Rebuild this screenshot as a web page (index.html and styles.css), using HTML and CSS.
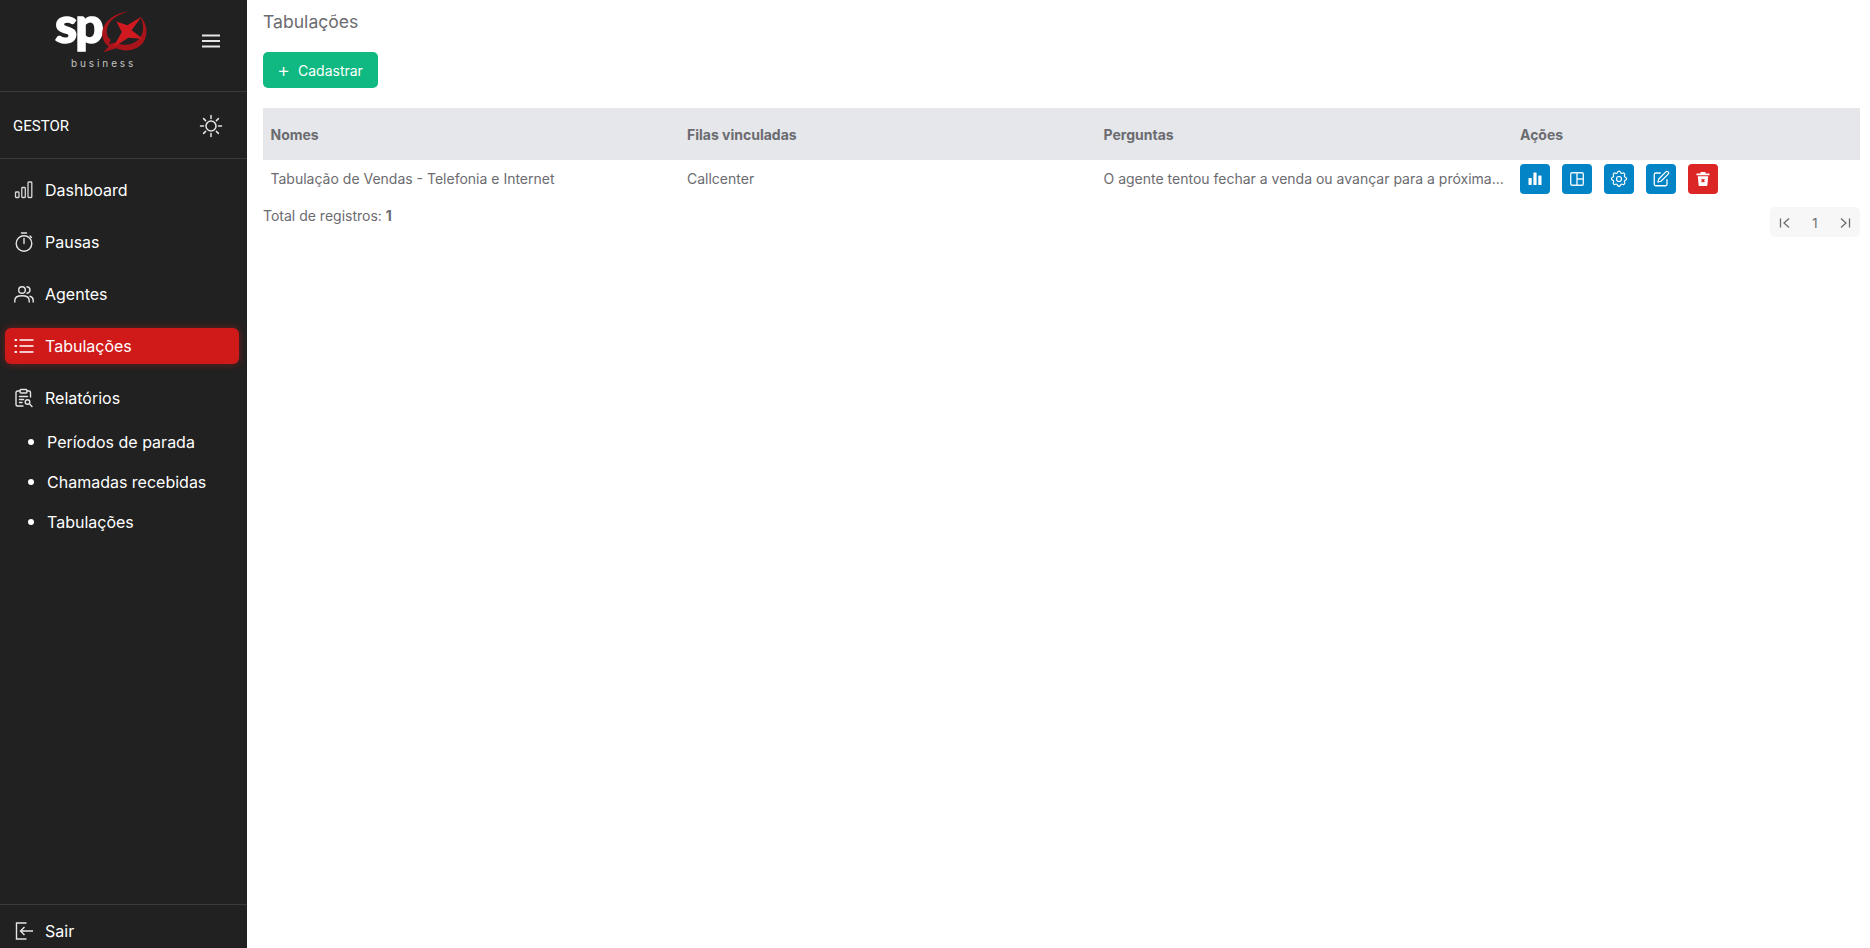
FILE: index.html
```html
<!DOCTYPE html>
<html lang="pt-BR">
<head>
<meta charset="utf-8">
<title>Tabulações</title>
<link rel="stylesheet" href="styles.css">
</head>
<body>
<div class="app">
  <aside class="sidebar">
    <div class="brand">
      <div class="logo">
        <div class="logo-top">
          <span class="logo-sp">sp</span>
          <svg class="logo-x" viewBox="0 0 44 48" width="48" height="46" preserveAspectRatio="none">
            <path d="M27 1C13 3 3 12 2 24c0 6 2 11 6 14L3 44l12-4c10 5 22 1 26-9 3-8 2-17-4-24 3 8 4 16-1 23-5 6-13 8-19 5l-4-1-5 2 2-5C4 27 5 13 15 7c4-3 8-5 12-6z" fill="#a8141a"/>
            <path d="M38 7 25 16 15 12l5 11-8 16 14-10 13 1-10-9z" fill="#d01a20"/>
          </svg>
        </div>
        <div class="logo-sub">business</div>
      </div>
      <svg class="ico-menu" viewBox="0 0 18 14" width="18" height="14"><path d="M0 1.500h18M0 7h18M0 12.500h18" stroke="#e5e5e5" stroke-width="2" fill="none"/></svg>
    </div>
    <div class="role">
      <span>GESTOR</span>
      <svg viewBox="0 0 24 24" width="24" height="24" fill="none" stroke="#e5e5e5" stroke-width="1.500" stroke-linecap="round"><circle cx="12" cy="12" r="5"/><path d="M12 1.500v3M12 19.500v3M1.500 12h3M19.500 12h3M4.600 4.600l2 2M17.400 17.400l2 2M4.600 19.400l2-2M17.400 6.600l2-2"/></svg>
    </div>
    <nav class="nav">
      <a class="item">
        <svg viewBox="0 0 20 20" width="20" height="20" fill="none" stroke="#d8d8d8" stroke-width="1.300"><rect x="1.500" y="12" width="3.500" height="5.500" rx=".8"/><rect x="7.800" y="7.500" width="3.500" height="10" rx=".8"/><rect x="14" y="2" width="3.800" height="15.500" rx=".8"/></svg>
        <span>Dashboard</span>
      </a>
      <a class="item">
        <svg viewBox="0 0 20 20" width="20" height="20" fill="none" stroke="#e5e5e5" stroke-width="1.400" stroke-linecap="round"><circle cx="10" cy="11.500" r="7.800"/><path d="M10 11.500V6.500M7.500 1h5M16 4l1.500 1.500"/></svg>
        <span>Pausas</span>
      </a>
      <a class="item">
        <svg viewBox="0 0 20 20" width="20" height="20" fill="none" stroke="#e5e5e5" stroke-width="1.400" stroke-linecap="round"><circle cx="8" cy="6" r="3.300"/><path d="M.8 18v-1.500c0-3 2.500-4.700 7.200-4.700s7.200 1.700 7.200 4.700V18M13 2.800c1.800.3 3 1.600 3 3.200s-1.200 2.900-3 3.200M16 12.300c2 .5 3.200 2 3.200 4V18"/></svg>
        <span>Agentes</span>
      </a>
      <a class="item active">
        <svg viewBox="0 0 20 20" width="20" height="20" fill="none" stroke="#fff" stroke-width="1.400" stroke-linecap="round"><path d="M6 4h13M6 10h13M6 16h13"/><path d="M1.500 4h.6M1.500 10h.6M1.500 16h.6" stroke-width="2.200"/></svg>
        <span>Tabulações</span>
      </a>
      <a class="item">
        <svg viewBox="0 0 20 20" width="20" height="20" fill="none" stroke="#e5e5e5" stroke-width="1.400" stroke-linecap="round" stroke-linejoin="round"><path d="M6 3H3.500C2.700 3 2 3.700 2 4.500v12c0 .8.700 1.500 1.500 1.500H9M13 3h2c.8 0 1.500.7 1.500 1.500V9"/><rect x="6" y="1.500" width="7" height="3.500" rx="1"/><path d="M5.500 8.500h8M5.500 11.500h4M5.500 14.500h2.500"/><circle cx="13.500" cy="14" r="2.300"/><path d="M15.300 15.800l2.700 2.700"/></svg>
        <span>Relatórios</span>
      </a>
      <ul class="sub">
        <li>Períodos de parada</li>
        <li>Chamadas recebidas</li>
        <li>Tabulações</li>
      </ul>
    </nav>
    <div class="logout">
      <a class="item">
        <svg viewBox="0 0 20 20" width="20" height="20" fill="none" stroke="#e5e5e5" stroke-width="1.400"><path d="M12.500 2H2.500v16h10"/><path d="M19 10H6.500M10.500 6l-4 4 4 4"/></svg>
        <span>Sair</span>
      </a>
    </div>
  </aside>
  <main class="main">
    <h1 class="title">Tabulações</h1>
    <button class="btn-add"><span class="plus">+</span>Cadastrar</button>
    <table class="table">
      <colgroup><col class="c1"><col class="c1"><col class="c1"><col></colgroup>
      <thead>
        <tr><th>Nomes</th><th>Filas vinculadas</th><th>Perguntas</th><th>Ações</th></tr>
      </thead>
      <tbody>
        <tr>
          <td>Tabulação de Vendas - Telefonia e Internet</td>
          <td>Callcenter</td>
          <td class="ellipsis">O agente tentou fechar a venda ou avançar para a próxima...</td>
          <td>
            <div class="actions">
              <button class="act"><svg viewBox="0 0 16 16" width="16" height="16" fill="#fff"><rect x="1.500" y="7" width="3.200" height="7" rx=".6"/><rect x="6.400" y="1.500" width="3.200" height="12.500" rx=".6"/><rect x="11.300" y="4.500" width="3.200" height="9.500" rx=".6"/></svg></button>
              <button class="act"><svg viewBox="0 0 16 16" width="16" height="16" fill="none" stroke="#e8f4fb" stroke-width="1.400"><rect x="1.700" y="1.700" width="12.600" height="12.600" rx="1.200"/><path d="M8 1.700v12.600M8 8h6.300"/></svg></button>
              <button class="act"><svg viewBox="0 0 24 24" width="20" height="20" fill="none" stroke="#fff" stroke-width="1.400" stroke-linejoin="round"><path d="M10.300 3.900c.4-1.700 3-1.700 3.400 0a1.700 1.700 0 0 0 2.600 1.100c1.500-.9 3.300.8 2.400 2.400a1.700 1.700 0 0 0 1.100 2.600c1.700.4 1.700 3 0 3.400a1.700 1.700 0 0 0-1.100 2.600c.9 1.500-.8 3.300-2.400 2.400a1.700 1.700 0 0 0-2.600 1.100c-.4 1.700-3 1.700-3.400 0a1.700 1.700 0 0 0-2.600-1.100c-1.500.9-3.300-.8-2.400-2.400a1.700 1.700 0 0 0-1.100-2.600c-1.700-.4-1.700-3 0-3.400a1.700 1.700 0 0 0 1.100-2.600c-.9-1.500.8-3.300 2.400-2.400a1.700 1.700 0 0 0 2.600-1.100z"/><circle cx="12" cy="12" r="3"/></svg></button>
              <button class="act"><svg viewBox="0 0 24 24" width="18" height="18" fill="none" stroke="#fff" stroke-width="1.700" stroke-linecap="round" stroke-linejoin="round"><path d="M11 4H5a2 2 0 0 0-2 2v13a2 2 0 0 0 2 2h13a2 2 0 0 0 2-2v-6"/><path d="M18.500 2.500a2.100 2.100 0 0 1 3 3L12 15l-4 1 1-4z"/></svg></button>
              <button class="act danger"><svg viewBox="0 0 16 16" width="16" height="16"><path d="M5.500 2.500V1h5v1.500H14.500v1.800h-13V2.500z" fill="#fff"/><path d="M2.800 5.300h10.400l-.8 8.700c0 .6-.5 1-1.100 1H4.700c-.6 0-1.100-.4-1.100-1z" fill="#fff"/><path d="M6.600 8.300l2.800 2.800M9.400 8.300l-2.800 2.800" stroke="#dc2626" stroke-width="1.400"/></svg></button>
            </div>
          </td>
        </tr>
      </tbody>
    </table>
    <div class="foot">
      <div class="total">Total de registros: <b>1</b></div>
      <div class="pager">
        <span class="pg"><svg viewBox="0 0 14 14" width="14" height="14" fill="none" stroke="#6b6b70" stroke-width="1.300"><path d="M2.500 2.500v9M11 2.500 6 7l5 4.500"/></svg></span>
        <span class="pg">1</span>
        <span class="pg"><svg viewBox="0 0 14 14" width="14" height="14" fill="none" stroke="#6b6b70" stroke-width="1.300"><path d="M11.500 2.500v9M3 2.500 8 7l-5 4.500"/></svg></span>
      </div>
    </div>
  </main>
</div>
</body>
</html>
```

FILE: styles.css
```css
* { box-sizing: border-box; }
html, body { margin: 0; height: 100%; overflow: hidden; }
body { font-family: Inter, "Liberation Sans", sans-serif; background: #fff; color: #6b6b70; }
.app { display: flex; height: 948px; }

.sidebar { width: 247px; flex: none; background: #212121; color: #fff; display: flex; flex-direction: column; }
.brand { height: 92px; border-bottom: 1px solid #3a3a3c; display: flex; align-items: flex-start; padding: 10px 0 0 55px; position: relative; }
.logo { width: 100px; display: flex; flex-direction: column; align-items: flex-start; }
.logo-top { display: flex; height: 46px; align-items: flex-start; }
.logo-sp { font-family: Lato, Inter, sans-serif; font-weight: 900; font-size: 50px; line-height: 64px; letter-spacing: -2px; color: #fff; margin: -18px 0 -14px; -webkit-text-stroke: 1.500px #fff; }
.logo-x { margin-left: -2px; }
.logo-sub { font-size: 10px; line-height: 12px; letter-spacing: 2.900px; color: #c4c4c4; margin: 1px 0 0 16px; }
.ico-menu { position: absolute; left: 202px; top: 34px; }
.role { height: 67px; border-bottom: 1px solid #3a3a3c; display: flex; align-items: center; justify-content: space-between; padding: 1px 24px 0 13px; font-family: Roboto, Inter, sans-serif; font-size: 15px; }
.nav { flex: 1; padding-top: 5px; display: flex; flex-direction: column; }
.item { display: flex; align-items: center; gap: 11px; height: 36px; margin: 8px 8px 8px 5px; padding-left: 9px; border-radius: 6px; font-size: 16px; color: #fff; }
.item.active { background: #d01a1a; box-shadow: 0 0 8px rgba(208, 26, 26, .45); width: 234px; margin-right: 8px; }
.sub { list-style: none; margin: 0; padding: 0 0 0 47px; }
.sub li { height: 40px; line-height: 40px; font-size: 16px; color: #fff; position: relative; }
.sub li::before { content: ""; position: absolute; left: -19px; top: 17px; width: 6px; height: 6px; border-radius: 50%; background: #fff; }
.nav .sub { margin-top: -2px; }
.logout { border-top: 1px solid #3a3a3c; height: 44px; flex: none; }
.logout .item { margin-top: 8px; margin-bottom: 0; height: 36px; }

.main { flex: 1; padding: 11px 10px 0 16px; min-width: 0; }
.title { margin: 0; font-size: 17.600px; font-weight: 400; line-height: 21px; color: #6b6b70; }
.btn-add { display: flex; align-items: center; margin-top: 20px; width: 115px; height: 36px; padding: 0 0 0 14px; background: #10b981; color: #fff; border: 0; border-radius: 5px; font: 400 14px Inter, sans-serif; }
.plus { font-size: 20px; font-weight: 300; width: 21px; text-align: left; line-height: 18px; }
.table { width: 1597px; margin-top: 20px; border-collapse: collapse; table-layout: fixed; font-size: 14px; }
.c1 { width: 416.500px; }
th { height: 52px; background: #e5e7eb; text-align: left; padding: 0 7.500px; font-weight: 700; color: #6b6b70; }
td { height: 38px; padding: 0 7.500px 2px; color: #6b6b70; white-space: nowrap; }
.ellipsis { overflow: hidden; }
.actions { display: flex; gap: 12px; margin-top: 2px; }
.act { width: 30px; height: 30px; padding: 0; border: 0; border-radius: 4px; background: #0284c7; display: flex; align-items: center; justify-content: center; }
.act.danger { background: #dc2626; }
.foot { display: flex; justify-content: space-between; align-items: flex-start; padding-top: 9px; }
.total { font-size: 14px; line-height: 17px; }
.pager { display: flex; }
.pg { width: 30px; height: 30px; background: #f7f7f7; display: flex; align-items: center; justify-content: center; padding-top: 1px; font-size: 13px; color: #6b6b70; }
.pg:first-child { border-radius: 5px 0 0 5px; }
.pg:last-child { border-radius: 0 5px 5px 0; }
```
